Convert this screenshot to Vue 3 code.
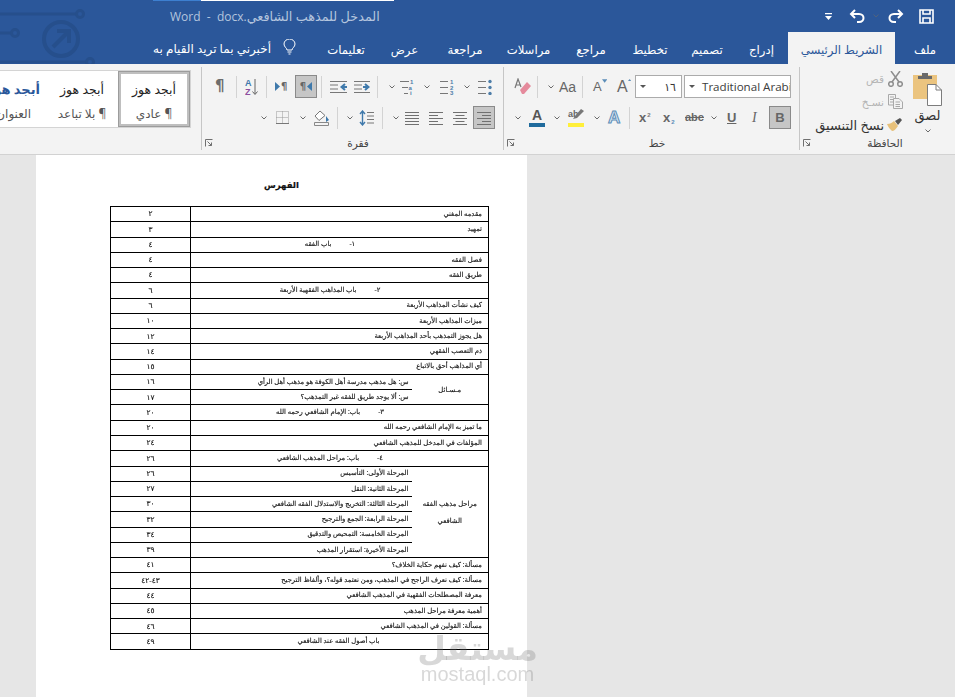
<script setup>
const tabs = [
  { t: 'ملف', w: 60 },
  { t: 'الشريط الرئيسي', w: 107, active: true },
  { t: 'إدراج', w: 53 },
  { t: 'تصميم', w: 56 },
  { t: 'تخطيط', w: 58 },
  { t: 'مراجع', w: 60 },
  { t: 'مراسلات', w: 65 },
  { t: 'مراجعة', w: 62 },
  { t: 'عرض', w: 59 },
  { t: 'تعليمات', w: 58 }
]
const rowsA = [
  ['مقدمه المغني', '٢'], ['تمهيد', '٣'], ['١-', '٤', 'باب الفقه'], ['فصل الفقه', '٤'], ['طريق الفقه', '٤'],
  ['٢-', '٦', 'باب المذاهب الفقهية الأربعة'], ['كيف نشأت المذاهب الأربعة', '٦'], ['ميزات المذاهب الأربعة', '١٠'],
  ['هل يجوز التمذهب بأحد المذاهب الأربعة', '١٢'], ['ذم التعصب الفقهي', '١٤'], ['أي المذاهب أحق بالاتباع', '١٥']
]
const rowsB = [
  ['٣-', '٢٠', 'باب: الإمام الشافعي رحمه الله'], ['ما تميز به الإمام الشافعي رحمه الله', '٢٠'],
  ['المؤلفات في المدخل للمذهب الشافعي', '٢٤'], ['٤-', '٢٦', 'باب: مراحل المذهب الشافعي']
]
const stages = [
  ['المرحلة الثانية: النقل', '٢٧'], ['المرحلة الثالثة: التخريج والاستدلال الفقه الشافعي', '٣٠'],
  ['المرحلة الرابعة: الجمع والترجيح', '٣٢'], ['المرحلة الخامسة: التمحيص والتدقيق', '٣٤'], ['المرحلة الأخيرة: استقرار المذهب', '٣٩']
]
const rowsC = [
  ['مسألة: كيف نفهم حكاية الخلاف؟', '٤١'], ['مسألة: كيف نعرف الراجح في المذهب، ومن نعتمد قوله؟، وألفاظ الترجيح', '٤٣-٤٢'],
  ['معرفة المصطلحات الفقهية في المذهب الشافعي', '٤٤'], ['أهمية معرفة مراحل المذهب', '٤٥'], ['مسألة: القولين في المذهب الشافعي', '٤٦']
]
</script>

<template>
  <div class="app">
    <svg class="defs" width="0" height="0">
      <symbol id="chev" viewBox="0 0 6 4"><path d="M.5.5 3 3 5.500.5" fill="none" stroke="#6a6a6a" stroke-width="1"/></symbol>
      <symbol id="launch" viewBox="0 0 8 8"><path d="M.5 7.500V.5H7.500M2.500 2.500 6.500 6.500M6.500 3.500V6.500H3.500" fill="none" stroke="#6f6f6f" stroke-width="1"/></symbol>
    </svg>

    <header class="head">
      <svg class="deco" width="100" height="64" viewBox="0 0 100 64" fill="none" stroke="#264f8c" stroke-width="3">
        <path d="M0 14H76M0 33H11M0 62H86"/>
        <circle cx="80" cy="14" r="3.500"/><circle cx="15" cy="33" r="3.500"/><circle cx="90" cy="62" r="3.500"/>
        <circle cx="61" cy="39" r="17" stroke-width="4"/>
        <path d="M53 47 69 31M57 31H69V43" stroke-width="4"/>
      </svg>
      <i class="strip strip-b"></i><i class="strip strip-w"></i>
      <div class="titlebar">
        <div class="doc-title">Word &nbsp;-&nbsp; docx.<span>المدخل للمذهب الشافعي</span></div>
        <div class="qat">
          <svg width="7" height="7" viewBox="0 0 7 7" fill="#fff"><path d="M0 0H7V1.300H0ZM0 3H7L3.500 7Z"/></svg>
          <svg class="q-undo" width="16" height="14" viewBox="0 0 16 14" fill="none" stroke="#fff" stroke-width="2"><path d="M6 1 2 5 6 9M2 5H10C13 5 14.500 7 14.500 9S13 13 10 13H8"/></svg>
          <svg class="q-ch" width="6" height="4"><use href="#chev" opacity=".6"/></svg>
          <svg class="q-redo" width="16" height="14" viewBox="0 0 16 14" fill="none" stroke="#fff" stroke-width="2"><path d="M10 1 14 5 10 9M14 5H6C3 5 1.500 7 1.500 9S3 13 6 13H8"/></svg>
          <svg class="q-save" width="15" height="15" viewBox="0 0 15 15" fill="none" stroke="#fff" stroke-width="1.600"><path d="M1 1H14V14H1ZM4 1V5H11V1M4 14V9H11V14"/></svg>
        </div>
      </div>
      <nav class="tabs">
        <div v-for="t in tabs" :key="t.t" class="tab" :class="{ active: t.active }" :style="{ width: t.w + 'px' }">{{ t.t }}</div>
        <svg class="bulb" width="13" height="16" viewBox="0 0 13 16" fill="none" stroke="#fff" stroke-width="1"><path d="M4 11C4 9 1 8 1 5A5.500 5 0 0 1 12 5C12 8 9 9 9 11ZM4.500 13H8.500M5.500 15H7.500"/></svg>
        <div class="help">أخبرني بما تريد القيام به</div>
      </nav>
    </header>

    <section class="ribbon">
      <div class="group g-styles">
        <div class="gallery">
          <div class="cell c-head"><b>أبجد هوز</b><small>العنوان</small></div>
          <div class="cell"><span>أبجد هوز</span><small>¶ بلا تباعد</small></div>
          <div class="cell sel"><span>أبجد هوز</span><small>¶ عادي</small></div>
        </div>
      </div>

      <div class="group g-para">
        <div class="row">
          <span class="pil m13">¶</span>
          <i class="sep m11"></i>
          <svg class="m8" width="13" height="18" viewBox="0 0 13 18"><text x="0" y="8" class="sorta">A</text><text x="0" y="17" class="sortz">Z</text><path d="M10 1V16M7.500 13.500 10 16.500 12.500 13.500" fill="none" stroke="#666"/></svg>
          <i class="sep m8"></i>
          <span class="bidi m8"><svg width="5" height="9" viewBox="0 0 5 9"><path d="M0 0 5 4.500 0 9Z" fill="#3f79ab"/></svg><b>¶</b></span>
          <span class="press m7"><b>¶</b><svg width="5" height="9" viewBox="0 0 5 9"><path d="M5 0 0 4.500 5 9Z" fill="#3f79ab"/></svg></span>
          <i class="sep m4"></i>
          <svg class="m8" width="17" height="14" viewBox="0 0 17 14"><path d="M0 1.500H17M0 12.500H17M0 5H8M0 9H8" stroke="#777"/><path d="M17 7H12M15 4 11.500 7 15 10" fill="none" stroke="#3f79ab" stroke-width="2"/></svg>
          <svg class="m7" width="16" height="14" viewBox="0 0 16 14"><path d="M0 1.500H16M0 12.500H16M0 5H8M0 9H8" stroke="#777"/><path d="M9 7H14M11 4 14.500 7 11 10" fill="none" stroke="#3f79ab" stroke-width="2"/></svg>
          <i class="sep m7"></i>
          <svg class="chev m11"><use href="#chev"/></svg>
          <svg class="m5" width="15" height="16" viewBox="0 0 15 16"><path d="M0 2.500H9M2 8.500H8M4 14.500H8" stroke="#777"/><text x="10" y="5" class="mini">1</text><text x="8.500" y="10.500" class="mini">a</text><text x="10" y="16" class="mini">i</text></svg>
          <svg class="chev m9"><use href="#chev"/></svg>
          <svg class="m10" width="14" height="16" viewBox="0 0 14 16"><path d="M0 2.500H8M0 8.500H8M0 14.500H8" stroke="#777"/><text x="10" y="5" class="mini">1</text><text x="10" y="10.500" class="mini">2</text><text x="10" y="16" class="mini">3</text></svg>
          <svg class="chev m10"><use href="#chev"/></svg>
          <svg class="m8" width="14" height="16" viewBox="0 0 14 16"><path d="M0 2.500H8M0 8.500H8M0 14.500H8" stroke="#777"/><g fill="#4d7da8"><circle cx="12" cy="2.500" r="1.700"/><circle cx="12" cy="8.500" r="1.700"/><circle cx="12" cy="14.500" r="1.700"/></g></svg>
        </div>
        <div class="row r2">
          <svg class="chev m59"><use href="#chev"/></svg>
          <svg class="m9" width="13" height="13" viewBox="0 0 13 13"><path d="M.5.5H12.500V12.500H.5ZM6.500.5V12.500M.5 6.500H12.500" fill="none" stroke="#999" stroke-dasharray="1 1"/><path d="M0 12.500H13" stroke="#777"/></svg>
          <svg class="chev m11"><use href="#chev"/></svg>
          <svg class="m8" width="16" height="16" viewBox="0 0 16 16"><path d="M6 1 1 6 5 10.500 11 5.500Z" fill="#fff" stroke="#777"/><path d="M12 6 15 10 12 12Z" fill="#3f79ab"/><path d="M.5 12.500H14.500V15.500H.5Z" fill="#f3f3f3" stroke="#888"/></svg>
          <i class="sep m7"></i>
          <svg class="chev m9"><use href="#chev"/></svg>
          <svg class="m6" width="15" height="16" viewBox="0 0 15 16"><path d="M8 2.500H15M8 6H15M8 9.500H15M8 13H15" stroke="#777"/><path d="M3.500 1V15M1 4 3.500 1 6 4M1 12 3.500 15 6 12" fill="none" stroke="#3f79ab" stroke-width="1.400"/></svg>
          <i class="sep m8"></i>
          <svg class="chev m10"><use href="#chev"/></svg>
          <svg class="al m6" viewBox="0 0 14 14"><path d="M0 1.500H14M0 4.500H14M0 7.500H14M0 10.500H14M0 13.500H14"/></svg>
          <svg class="al m10" viewBox="0 0 14 14"><path d="M0 1.500H14M0 4.500H9M0 7.500H14M0 10.500H9M0 13.500H14"/></svg>
          <svg class="al m10" viewBox="0 0 14 14"><path d="M0 1.500H14M2.500 4.500H11.500M0 7.500H14M2.500 10.500H11.500M0 13.500H14"/></svg>
          <span class="press m6 pr"><svg class="al" viewBox="0 0 14 14"><path d="M0 1.500H14M5 4.500H14M0 7.500H14M5 10.500H14M0 13.500H14"/></svg></span>
        </div>
        <footer class="foot"><svg class="launch"><use href="#launch"/></svg><span>فقرة</span></footer>
      </div>

      <div class="group g-font">
        <div class="row">
          <svg class="m10" width="17" height="17" viewBox="0 0 17 17"><path d="M6 12 13 4 17 8 10 16H8Z" fill="#e58a9c"/><path d="M1 10 4 1 7 9M2 7H6" fill="none" stroke="#777" stroke-width="1.200"/></svg>
          <i class="sep m6"></i>
          <svg class="chev m10"><use href="#chev"/></svg>
          <span class="txt aa m5">Aa</span>
          <i class="sep m8"></i>
          <span class="txt grow m10">A<svg width="6" height="4" viewBox="0 0 6 4"><path d="M0 0H6L3 4Z" fill="#5b8db8"/></svg></span>
          <span class="txt grow big m10">A<svg width="6" height="4" viewBox="0 0 6 4"><path d="M0 4H6L3 0Z" fill="#5b8db8"/></svg></span>
          <div class="box size m4"><i class="tri"></i><span>١٦</span></div>
          <div class="box fname m2"><i class="tri"></i><span>Traditional Arabic</span></div>
        </div>
        <div class="row r2">
          <svg class="chev m11"><use href="#chev"/></svg>
          <span class="under m8"><b>A</b><i></i></span>
          <svg class="chev m9"><use href="#chev"/></svg>
          <span class="hl m8"><b>ab</b><svg width="11" height="12" viewBox="0 0 11 12"><path d="M0 11 2 8 8 1 11 3 4 10Z" fill="#777"/></svg><i></i></span>
          <svg class="chev m10"><use href="#chev"/></svg>
          <span class="outline m8">A</span>
          <i class="sep m7"></i>
          <span class="txt sc m9">x<sup>2</sup></span>
          <span class="txt sc m11">x<sub>2</sub></span>
          <span class="txt abc m9">abc</span>
          <svg class="chev m10"><use href="#chev"/></svg>
          <span class="txt u m10">U</span>
          <span class="txt it m16">I</span>
          <span class="press m9 pr bold">B</span>
        </div>
        <footer class="foot"><svg class="launch"><use href="#launch"/></svg><span>خط</span></footer>
      </div>

      <div class="group g-clip">
        <div class="clip">
          <div class="clip-list">
            <div class="clip-row off"><span>قص</span>
              <svg width="15" height="16" viewBox="0 0 15 16" fill="none" stroke="#8e8e8e" stroke-width="1.500"><circle cx="3" cy="13" r="2.300"/><circle cx="12" cy="13" r="2.300"/><path d="M4 11 12 0M11 11 3 0"/></svg>
            </div>
            <div class="clip-row off"><span>نسـخ</span>
              <svg width="15" height="15" viewBox="0 0 15 15" fill="#f3f3f3" stroke="#a9a9a9"><path d="M.5.5H7.500V11H.5ZM2 3H6M2 5.500H6M2 8H6"/><path d="M5.500 4.500H11L14.500 8V14.500H5.500ZM7.500 8H12M7.500 10.500H12M7.500 12.500H12"/></svg>
            </div>
            <div class="clip-row dark"><span>نسخ التنسيق</span>
              <svg width="16" height="15" viewBox="0 0 16 15"><path d="M0 7C3 7 5 6 7 4L11 9C9 12 7 14 5 14 3 12 1 10 0 7Z" fill="#e7c17b"/><path d="M8 4 13 1 15 3 11 8Z" fill="#555"/></svg>
            </div>
          </div>
          <div class="paste">
            <svg width="29" height="34" viewBox="0 0 29 34"><path d="M0 3H24V27H0Z" fill="#ebc47f"/><path d="M5 4H19V7H5ZM9 1H15V4H9Z" fill="#6a6a6a"/><path d="M14.500 12.500H23L28.500 18V33.500H14.500Z" fill="#fff" stroke="#7c7c7c"/><path d="M23 12.500V18H28.500" fill="none" stroke="#7c7c7c"/></svg>
            <span>لصق</span>
            <svg class="chev"><use href="#chev"/></svg>
          </div>
        </div>
        <footer class="foot"><svg class="launch"><use href="#launch"/></svg><span>الحافظة</span></footer>
      </div>
    </section>

    <main class="docarea">
      <article class="page">
        <h1>الفهرس</h1>
        <table dir="rtl">
          <colgroup><col class="c1"><col class="c2"><col class="c3"></colgroup>
          <tbody>
            <tr v-for="r in rowsA" :key="r[0]">
              <td colspan="2" :class="{ ctr: r[2] }"><template v-if="r[2]">{{ r[0] }}<i class="tabgap"></i>{{ r[2] }}</template><template v-else>{{ r[0] }}</template></td>
              <td class="num">{{ r[1] }}</td>
            </tr>
            <tr>
              <td rowspan="2" class="lab">مـسـائل</td>
              <td class="in">س: هل مذهب مدرسة أهل الكوفة هو مذهب أهل الرأي</td>
              <td class="num">١٦</td>
            </tr>
            <tr><td class="in">س: ألا يوجد طريق للفقه غير التمذهب؟</td><td class="num">١٧</td></tr>
            <tr v-for="r in rowsB" :key="r[2] || r[0]">
              <td colspan="2" :class="{ ctr: r[2] }"><template v-if="r[2]">{{ r[0] }}<i class="tabgap"></i>{{ r[2] }}</template><template v-else>{{ r[0] }}</template></td>
              <td class="num">{{ r[1] }}</td>
            </tr>
            <tr>
              <td rowspan="6" class="lab tall">مراحل مذهب الفقه الشافعي</td>
              <td class="in">المرحلة الأولى: التأسيس</td>
              <td class="num">٢٦</td>
            </tr>
            <tr v-for="r in stages" :key="r[0]"><td class="in">{{ r[0] }}</td><td class="num">{{ r[1] }}</td></tr>
            <tr v-for="r in rowsC" :key="r[0]"><td colspan="2">{{ r[0] }}</td><td class="num">{{ r[1] }}</td></tr>
            <tr><td colspan="2" class="mid">باب أصول الفقه عند الشافعي</td><td class="num">٤٩</td></tr>
          </tbody>
        </table>
      </article>
      <div class="mark"><b>مستقل</b><span>mostaql.com</span></div>
    </main>
  </div>
</template>

<style scoped>
.app { width: 955px; height: 697px; display: flex; flex-direction: column; overflow: hidden; position: relative; font-family: "Open Sans", "DejaVu Sans", sans-serif; color: #333; background: #e6e6e6; }
.defs { position: absolute; }
i { display: block; font-style: normal; }

.head { height: 64px; background: #2b579a; position: relative; flex: none; }
.deco { position: absolute; left: 0; top: 0; }
.strip { position: absolute; top: 0; height: 1px; }
.strip-b { left: 153px; width: 48px; background: #3d7fd0; }
.strip-w { left: 201px; width: 193px; background: #fff; }
.titlebar { height: 32px; display: flex; align-items: center; position: relative; padding-left: 170px; }
.doc-title { color: #b4c5de; font-size: 12px; white-space: nowrap; direction: ltr; }
.doc-title span { font-size: 12.800px; }
.qat { margin-left: auto; display: flex; align-items: center; margin-right: 21px; }
.q-undo { margin-left: 17px; }
.q-ch { margin-left: 8px; }
.q-redo { margin-left: 9px; }
.q-save { margin-left: 15px; }
.tabs { height: 32px; display: flex; direction: rtl; position: relative; align-items: stretch; color: #fff; font-size: 11.700px; }
.tab { display: flex; align-items: center; justify-content: center; flex: none; padding-top: 2px; box-sizing: border-box; }
.tab.active { background: #f3f3f3; color: #2b579a; }
.bulb { align-self: center; margin-right: 21px; margin-top: -2px; }
.help { align-self: center; margin-right: 12px; white-space: nowrap; font-size: 12px; }

.ribbon { height: 91px; flex: none; background: #f3f3f3; border-bottom: 1px solid #d2d2d2; padding: 3px 0 4px; box-sizing: border-box; display: flex; }
.group { height: 83px; box-sizing: border-box; border-right: 1px solid #c6c6c6; position: relative; display: flex; flex-direction: column; flex: none; }
.g-styles { width: 202px; }
.g-para { width: 302px; padding-top: 8px; }
.g-font { width: 296px; padding-top: 8px; }
.g-clip { width: 155px; border-right: 0; }
.g-clip .foot span { padding-left: 4px; }
.row { height: 23px; display: flex; align-items: center; flex: none; }
.r2 { margin-top: 8px; }
.foot { margin-top: auto; height: 14px; display: flex; align-items: center; font-size: 10.500px; color: #444; padding-left: 3px; }
.foot span { flex: 1; text-align: center; padding-right: 3px; }
.launch { width: 8px; height: 8px; margin-right: 3px; }
.sep { width: 1px; height: 22px; background: #d3d3d3; flex: none; }
.chev { width: 6px; height: 4px; flex: none; }

.m2 { margin-left: 2px; } .m4 { margin-left: 4px; } .m5 { margin-left: 5px; } .m6 { margin-left: 6px; } .m7 { margin-left: 7px; }
.m8 { margin-left: 8px; } .m9 { margin-left: 9px; } .m10 { margin-left: 10px; } .m11 { margin-left: 11px; } .m13 { margin-left: 13px; }
.m16 { margin-left: 16px; } .m59 { margin-left: 59px; }

.pil { font: bold 15px "DejaVu Sans", sans-serif; color: #6d6d6d; width: 10px; line-height: 1; }
.sorta { font: bold 9px "Liberation Sans", sans-serif; fill: #3f79ab; }
.sortz { font: bold 9px "Liberation Sans", sans-serif; fill: #8d4f9f; }
.mini { font: bold 6px "Liberation Sans", sans-serif; fill: #4d7da8; }
.bidi { width: 13px; display: flex; align-items: center; gap: 1px; font: bold 10px "DejaVu Sans", sans-serif; color: #666; }
.press { width: 22px; height: 23px; box-sizing: border-box; background: #c6c6c6; border: 1px solid #8a8a8a; display: flex; align-items: center; justify-content: center; gap: 1px; font: bold 10px "DejaVu Sans", sans-serif; color: #666; flex: none; }
.al { width: 14px; height: 14px; flex: none; fill: none; stroke: #707070; stroke-width: 1; }

.txt { font-family: "Liberation Sans", sans-serif; color: #666; line-height: 1; }
.aa { font-size: 14px; width: 15px; white-space: nowrap; }
.grow { font-size: 13px; width: 14px; display: flex; align-items: flex-start; }
.grow.big { font-size: 16px; }
.grow svg { margin-top: -1px; }
.box { height: 23px; box-sizing: border-box; background: #fff; border: 1px solid #ababab; display: flex; align-items: center; flex: none; overflow: hidden; }
.tri { width: 0; height: 0; border: 3px solid transparent; border-top: 3px solid #555; border-bottom: 0; margin-left: 4px; flex: none; }
.size { width: 47px; font-size: 11px; }
.size span { margin-left: auto; margin-right: 5px; }
.fname { width: 107px; }
.fname span { margin-left: 7px; font-size: 11.600px; white-space: nowrap; color: #3c3c3c; }
.under { width: 16px; display: flex; flex-direction: column; align-items: center; font: bold 14px/13px "Liberation Sans", sans-serif; color: #555; }
.under i { width: 16px; height: 4px; background: #1f6a9c; margin-top: 1px; }
.hl { width: 16px; height: 20px; position: relative; display: block; font: bold 9px/12px "Liberation Sans", sans-serif; color: #666; }
.hl svg { position: absolute; left: 5px; top: 0; }
.hl i { position: absolute; left: 0; bottom: 1px; width: 16px; height: 4px; background: #ffef3a; }
.outline { width: 14px; font: bold 17px/1 "Liberation Sans", sans-serif; color: #dbe8f3; -webkit-text-stroke: 1px #5b8db8; }
.sc { font-size: 13px; font-weight: bold; width: 13px; white-space: nowrap; position: relative; }
.sc sup, .sc sub { font-size: 6px; color: #5b8db8; vertical-align: baseline; margin-left: 1px; position: relative; }
.sc sup { top: -5px; color: #777; }
.sc sub { top: 2px; }
.abc { font-size: 11px; width: 16px; text-decoration: line-through; font-weight: bold; }
.u { font-size: 13px; font-weight: bold; text-decoration: underline; width: 9px; }
.it { font: italic 14px "Liberation Serif", serif; color: #666; width: 8px; }
.bold { font: bold 13px "Liberation Sans", sans-serif; }

.gallery { margin-top: 3px; width: 191px; height: 58px; box-sizing: border-box; background: #fff; border: 1px solid #d4d4d4; border-left: 0; display: flex; justify-content: flex-end; overflow: hidden; direction: ltr; flex: none; }
.cell { width: 72px; flex: none; box-sizing: border-box; direction: rtl; display: flex; flex-direction: column; align-items: center; padding-top: 11px; font-size: 12.500px; line-height: 15px; color: #222; white-space: nowrap; }
.cell small { font-size: 12px; line-height: 14px; color: #555; margin-top: 10px; }
.c-head { width: 70px; align-items: flex-start; padding-right: 6px; overflow: hidden; }
.c-head b { color: #2b579a; font-size: 13px; }
.c-head small { margin-top: 10px; margin-right: 9px; }
.sel { border: 3px solid #bfbfbf; outline: 1px solid #9c9c9c; outline-offset: -1px; padding-top: 8px; }

.clip { display: flex; flex: none; }
.clip-list { flex: 1; padding-right: 2px; }
.clip-row { height: 23px; display: flex; align-items: center; justify-content: flex-end; gap: 4px; font-size: 10.500px; color: #333; }
.clip-row svg { flex: none; }
.dark { font-size: 13px; gap: 3px; }
.off { color: #b5b5b5; }
.paste { width: 50px; flex: none; display: flex; flex-direction: column; align-items: center; padding: 5px 5px 0 0; box-sizing: border-box; font-size: 13px; }
.paste span { line-height: 18px; }
.paste .chev { margin-top: 5px; }

.docarea { flex: 1; position: relative; padding-left: 36px; min-height: 0; }
.page { width: 491px; height: 100%; background: #fff; overflow: hidden; }
h1 { margin: 0; height: 51px; box-sizing: border-box; padding-top: 23px; text-align: center; font-size: 8.500px; line-height: 14px; color: #111; font-weight: bold; -webkit-text-stroke: .2px #111; }
table { margin-left: 74px; width: 378px; height: 444px; table-layout: fixed; border-collapse: collapse; font-size: 6.800px; color: #111; font-weight: 400; -webkit-text-stroke: .15px #222; will-change: transform; }
.c1 { width: 77px; } .c2 { width: 221px; } .c3 { width: 80px; }
td { border: 1px solid #000; padding: 0 6px 0 4px; line-height: 1; height: 14px; white-space: nowrap; overflow: hidden; }
.num { text-align: center; font-weight: normal; padding: 0; font-size: 7.500px; }
.in { padding-right: 3px; border-right: 0; }
.lab { border-left: 0; text-align: center; white-space: normal; line-height: 17px; padding: 0 8px; }
.tall { padding: 0 10px; }
.ctr { text-align: center; padding-left: 0; padding-right: 19px; }
.mid { text-align: center; }
.tabgap { display: inline-block; width: 18px; }

.mark { position: absolute; left: 420px; top: 479px; width: 115px; display: flex; flex-direction: column; align-items: center; color: rgba(110, 110, 110, .27); pointer-events: none; }
.mark b { font: bold 33px/30px "DejaVu Sans", sans-serif; white-space: nowrap; direction: rtl; }
.mark span { font: 400 20px/20px "Liberation Sans", sans-serif; }
</style>

<style>
html, body { margin: 0; padding: 0; overflow: hidden; }
</style>
